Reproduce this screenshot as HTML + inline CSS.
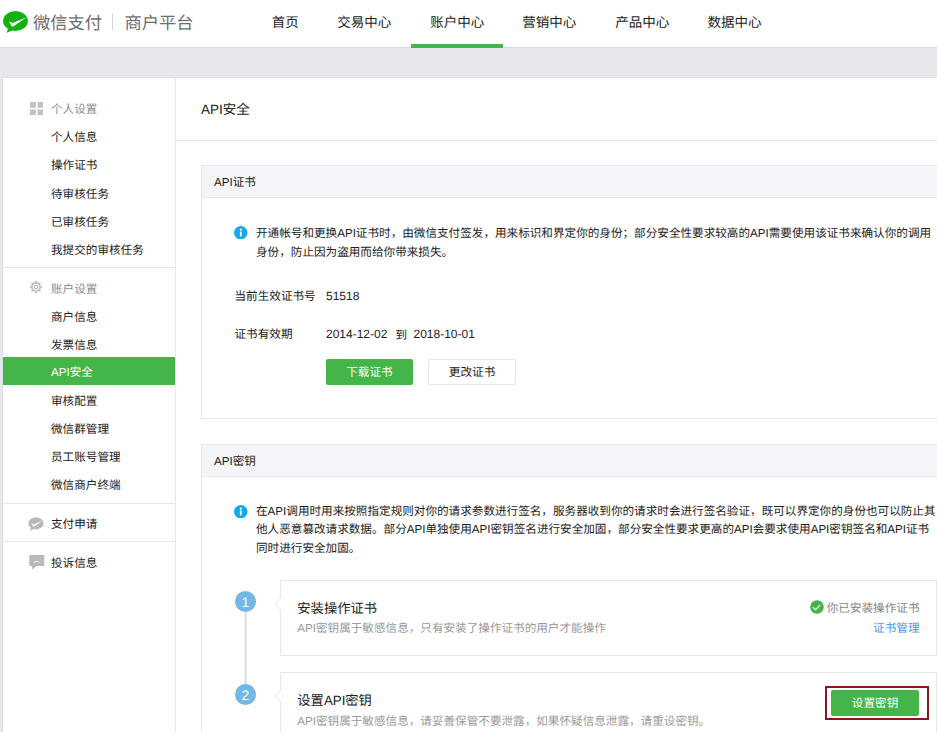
<!DOCTYPE html>
<html lang="zh-CN">
<head>
<meta charset="utf-8">
<title>微信支付商户平台 - API安全</title>
<style>
html,body{margin:0;padding:0}
body{width:937px;height:732px;overflow:hidden;text-rendering:geometricPrecision;-webkit-font-smoothing:antialiased;background:#e7e8eb;font-family:"Liberation Sans",sans-serif;font-size:11.6px;color:#222;position:relative}
*{box-sizing:border-box}
.abs{position:absolute;white-space:nowrap}
a{text-decoration:none;color:inherit}
.l{letter-spacing:0}

/* header */
.header{position:absolute;left:0;top:0;width:937px;height:48px;background:#fff;border-bottom:1px solid #d8d9dc}
.logo-ico{position:absolute;left:3px;top:11px;width:25px;height:22px}
.logo-t{position:absolute;top:0;height:46px;line-height:46px;font-size:17.3px;font-weight:300;color:#6e6e6e;white-space:nowrap}
.logo-sep{position:absolute;left:112px;top:13px;width:1px;height:17px;background:#d6d6d6}
.nav a{position:absolute;top:0;height:46px;line-height:46px;font-size:13.5px;color:#222;width:92px;text-align:center;white-space:nowrap}
.nav a.on:after{content:"";position:absolute;left:0;right:0;top:44.1px;height:3.9px;background:#44b549}

/* sidebar */
.side{position:absolute;left:3px;top:78px;width:173px;height:660px;background:#fff;border-right:1px solid #e7e7eb}
.side .it{position:absolute;left:0;width:172px;height:28px;line-height:31px;overflow:hidden;padding-left:48px;font-size:11.6px;color:#222;white-space:nowrap}
.side .hd{color:#8d8d8d}
.side .dk{color:#222}
.side .on{background:#44b549;color:#fff}
.side .ln{position:absolute;left:0;width:172px;height:1px;background:#e7e7eb}
.side svg{position:absolute}

/* main */
.main{position:absolute;left:176px;top:78px;width:761px;height:660px;background:#fff}
.h2{left:25px;top:18px;height:28px;line-height:28px;font-size:13.5px;color:#222}
.hline{position:absolute;left:0;top:61.5px;width:761px;height:1px;background:#e7e7eb}
.box{position:absolute;left:25px;width:760px;border:1px solid #e7e7eb;background:#fff}
.box .bh{position:absolute;left:0;top:0;width:100%;height:32px;background:#f4f5f9;border-bottom:1px solid #e7e7eb;line-height:33px;padding-left:12px;font-size:11.6px;color:#222;white-space:nowrap}
.info{position:absolute;width:13.5px;height:13.5px}
.p{position:absolute;white-space:nowrap;font-size:11.6px;color:#222}
.btn{position:absolute;width:87.5px;height:26px;line-height:28px;overflow:hidden;text-align:center;font-size:11.6px;border-radius:2px;white-space:nowrap}
.btn.g{background:#44b549;color:#fff}
.btn.w{background:#fff;color:#222;border:1px solid #e7e7eb;line-height:26px}
.step{position:absolute;left:78.3px;width:656.7px;height:76px;border:1px solid #e7e7eb;background:#fff}
.num{position:absolute;width:21px;height:21px;border-radius:50%;background:#74b6e6;color:#fff;text-align:center;line-height:23px;font-size:14px;overflow:hidden}
.st{position:absolute;left:16px;font-size:13.3px;color:#222;height:20px;line-height:20px;white-space:nowrap}
.sd{position:absolute;left:16px;font-size:11.6px;color:#9a9a9a;height:18px;line-height:18px;white-space:nowrap}
.arr{position:absolute;left:-7px;width:7px;height:14px}
</style>
</head>
<body>

<div class="header">
  <svg class="logo-ico" viewBox="0 0 25 22">
    <ellipse cx="12.5" cy="10" rx="12.4" ry="10" fill="#12b012"/>
    <path d="M5 17.5 L3.6 21.8 L10 19.2 Z" fill="#12b012"/>
    <path d="M6.1 10.3 L9.7 12.1 L23.6 6.2 L10.2 15.5 L8.6 15.5 Z" fill="#fff"/>
  </svg>
  <div class="logo-t" style="left:33px">微信支付</div>
  <div class="logo-sep"></div>
  <div class="logo-t" style="left:124.5px">商户平台</div>
  <div class="nav">
    <a style="left:253.3px;width:64px">首页</a>
    <a style="left:318.3px">交易中心</a>
    <a class="on" style="left:411.3px">账户中心</a>
    <a style="left:503.3px">营销中心</a>
    <a style="left:596.3px">产品中心</a>
    <a style="left:688.5px">数据中心</a>
  </div>
</div>

<div style="position:absolute;left:2px;top:77px;width:935px;height:1px;background:#dddee2"></div>
<div style="position:absolute;left:2px;top:77px;width:1px;height:655px;background:#dddee2"></div>
<div class="side">
  <svg style="left:26.5px;top:23.5px" width="13.5" height="13.5" viewBox="0 0 13 13"><g fill="#c2c2c2"><rect x="0" y="0" width="5.6" height="5.6"/><rect x="7.2" y="0" width="5.6" height="5.6"/><rect x="0" y="7.2" width="5.6" height="5.6"/><rect x="7.2" y="7.2" width="5.6" height="5.6"/></g></svg>
  <div class="it hd" style="top:16px">个人设置</div>
  <div class="it" style="top:44.2px">个人信息</div>
  <div class="it" style="top:72.4px">操作证书</div>
  <div class="it" style="top:100.6px">待审核任务</div>
  <div class="it" style="top:128.8px">已审核任务</div>
  <div class="it" style="top:157px">我提交的审核任务</div>
  <div class="ln" style="top:189px"></div>

  <svg style="left:26.1px;top:202.3px" width="14" height="14" viewBox="-7 -7 14 14"><g fill="#b9b9b9"><path d="M-1.6 -4.2L0 -6.8L1.6 -4.2Z" transform="rotate(0)"/><path d="M-1.6 -4.2L0 -6.8L1.6 -4.2Z" transform="rotate(45)"/><path d="M-1.6 -4.2L0 -6.8L1.6 -4.2Z" transform="rotate(90)"/><path d="M-1.6 -4.2L0 -6.8L1.6 -4.2Z" transform="rotate(135)"/><path d="M-1.6 -4.2L0 -6.8L1.6 -4.2Z" transform="rotate(180)"/><path d="M-1.6 -4.2L0 -6.8L1.6 -4.2Z" transform="rotate(225)"/><path d="M-1.6 -4.2L0 -6.8L1.6 -4.2Z" transform="rotate(270)"/><path d="M-1.6 -4.2L0 -6.8L1.6 -4.2Z" transform="rotate(315)"/></g><circle r="4" fill="none" stroke="#b9b9b9" stroke-width="1.3"/><circle r="1.8" fill="none" stroke="#b9b9b9" stroke-width="1.2"/></svg>
  <div class="it hd" style="top:196px">账户设置</div>
  <div class="it" style="top:224px">商户信息</div>
  <div class="it" style="top:252px">发票信息</div>
  <div class="it on" style="top:279px"><span class="l">API</span>安全</div>
  <div class="it" style="top:308px">审核配置</div>
  <div class="it" style="top:336.2px">微信群管理</div>
  <div class="it" style="top:364px">员工账号管理</div>
  <div class="it" style="top:392px">微信商户终端</div>
  <div class="ln" style="top:425px"></div>

  <svg style="left:25.2px;top:439.1px" width="16" height="14" viewBox="0 0 16 14"><ellipse cx="8" cy="6.3" rx="7.6" ry="6.1" fill="#b9b9b9"/><path d="M2.9 10.2L2 13.7L6.4 11.9Z" fill="#b9b9b9"/><path d="M3.5 6.3L6 7.4L14.2 3.5L6.5 9.6L5.1 9.6Z" fill="#fff"/></svg>
  <div class="it dk" style="top:430.5px">支付申请</div>
  <div class="ln" style="top:463px"></div>

  <svg style="left:25.7px;top:477px" width="16" height="15" viewBox="0 0 16 15"><path d="M0.3 0H15.3V10.9H7.4L3.3 14.8L2.8 10.9H0.3Z" fill="#b9b9b9"/><path d="M5.1 7.5Q7.7 4.7 10.3 7.5" fill="none" stroke="#fff" stroke-width="1" stroke-linecap="round"/></svg>
  <div class="it dk" style="top:469.5px">投诉信息</div>
</div>

<div class="main">
  <div class="abs h2"><span class="l">API</span>安全</div>
  <div class="hline"></div>

  <div class="box" style="top:87px;height:254px">
    <div class="bh"><span class="l">API</span>证书</div>
    <svg class="info" style="left:32.2px;top:59.6px" viewBox="0 0 13 13"><circle cx="6.5" cy="6.5" r="6.5" fill="#14a9ee"/><rect x="5.7" y="5.3" width="1.7" height="4.7" fill="#fff"/><circle cx="6.55" cy="3.5" r="1" fill="#fff"/></svg>
    <div class="p" style="left:54px;top:57.5px;line-height:19px">开通帐号和更换<span class="l">API</span>证书时，由微信支付签发，用来标识和界定你的身份；部分安全性要求较高的<span class="l">API</span>需要使用该证书来确认你的调用<br>身份，防止因为盗用而给你带来损失。</div>
    <div class="p" style="left:32.5px;top:121px;line-height:20px">当前生效证书号</div>
    <div class="p l" style="left:124px;top:120px;line-height:20px;font-size:12px">51518</div>
    <div class="p" style="left:32.5px;top:159px;line-height:20px">证书有效期</div>
    <div class="p l" style="left:124px;top:158px;line-height:20px;font-size:12px">2014-12-02</div>
    <div class="p" style="left:193.5px;top:159.5px;line-height:20px">到</div>
    <div class="p l" style="left:211.5px;top:158px;line-height:20px;font-size:12px">2018-10-01</div>
    <a class="btn g" style="left:123.7px;top:193px">下载证书</a>
    <a class="btn w" style="left:226.3px;top:193px">更改证书</a>
  </div>

  <div class="box" style="top:366.2px;height:400px">
    <div class="bh"><span class="l">API</span>密钥</div>
    <svg class="info" style="left:32.2px;top:59.4px" viewBox="0 0 13 13"><circle cx="6.5" cy="6.5" r="6.5" fill="#14a9ee"/><rect x="5.7" y="5.3" width="1.7" height="4.7" fill="#fff"/><circle cx="6.55" cy="3.5" r="1" fill="#fff"/></svg>
    <div class="p" style="left:54px;top:57.5px;line-height:18.4px">在<span class="l">API</span>调用时用来按照指定规则对你的请求参数进行签名，服务器收到你的请求时会进行签名验证，既可以界定你的身份也可以防止其<br>他人恶意篡改请求数据。部分<span class="l">API</span>单独使用<span class="l">API</span>密钥签名进行安全加固，部分安全性要求更高的<span class="l">API</span>会要求使用<span class="l">API</span>密钥签名和<span class="l">API</span>证书<br>同时进行安全加固。</div>

    <svg style="position:absolute;left:42px;top:160px" width="4" height="85" viewBox="0 0 4 85"><rect x="0.6" y="0" width="2.3" height="85" fill="#e0e1e7"/></svg>
    <div class="num l" style="left:33px;top:146px">1</div>
    <div class="num l" style="left:33px;top:239px">2</div>

    <div class="step" style="top:134.8px">
      <svg class="arr" style="top:16px" viewBox="0 0 7 14"><path d="M7 0.5 L0.8 7 L7 13.5" fill="#fff" stroke="#e7e7eb" stroke-width="1"/></svg>
      <div class="st" style="top:18px">安装操作证书</div>
      <div class="sd" style="top:39.5px"><span class="l">API</span>密钥属于敏感信息，只有安装了操作证书的用户才能操作</div>
      <svg style="position:absolute;left:528.5px;top:19px" width="14" height="14" viewBox="0 0 14 14"><circle cx="7" cy="7" r="6.8" fill="#44b549"/><path d="M2.9 7.2 L5.65 9.7 L10.1 4.9" fill="none" stroke="#fff" stroke-width="1.15"/></svg>
      <div class="p" style="right:16.5px;top:19px;line-height:18px;color:#868686">你已安装操作证书</div>
      <div class="p" style="right:16.5px;top:39px;line-height:18px;color:#459ae9"><a>证书管理</a></div>
    </div>

    <div class="step" style="top:227.3px;height:120px">
      <svg class="arr" style="top:16px" viewBox="0 0 7 14"><path d="M7 0.5 L0.8 7 L7 13.5" fill="#fff" stroke="#e7e7eb" stroke-width="1"/></svg>
      <div class="st" style="top:18px">设置<span class="l">API</span>密钥</div>
      <div class="sd" style="top:39.5px"><span class="l">API</span>密钥属于敏感信息，请妥善保管不要泄露，如果怀疑信息泄露，请重设密钥。</div>
      <div style="position:absolute;left:544px;top:12.5px;width:103.5px;height:34.5px;border:2px solid #861823"></div>
      <a class="btn g" style="left:550px;top:16.5px">设置密钥</a>
    </div>
  </div>
</div>

<script>
/* If CJK glyphs fall back to a narrower placeholder box, widen tracking so line lengths stay the same. */
(function(){
  var s=document.createElement('span');
  s.style.cssText='position:absolute;visibility:hidden;white-space:nowrap;font-size:100px;letter-spacing:0';
  s.textContent='\u4e2d\u4e2d\u4e2d\u4e2d';
  document.body.appendChild(s);
  var r=s.getBoundingClientRect().width/400;
  document.body.removeChild(s);
  if(r>0.3&&Math.abs(r-1)>0.02){
    var st=document.createElement('style');
    st.textContent='body *{letter-spacing:'+(1-r).toFixed(3)+'em}body .l{letter-spacing:0}';
    document.head.appendChild(st);
  }
})();
</script>

</body>
</html>
